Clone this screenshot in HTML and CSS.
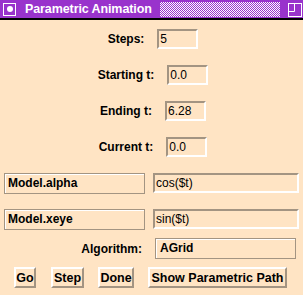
FILE: index.html
```html
<!DOCTYPE html>
<html lang="en">
<head>
    <meta charset="UTF-8">
    <title>Parametric Animation</title>
    <link rel="stylesheet" href="styles.css">
</head>
<body>
    <div class="title-bar">
        <span class="menu-btn"><span class="dot"></span></span>
        <span class="title">Parametric Animation</span>
        <span class="grip"></span>
        <svg class="max-btn" width="14" height="14" viewBox="0 0 14 14">
            <rect x="0.5" y="0.5" width="13" height="13" fill="none" stroke="#fff"/>
            <path d="M0 8.5 H6.5 V0" fill="none" stroke="#fff"/>
        </svg>
    </div>

    <div class="params">
        <div class="param">
            <label>Steps:</label>
            <div class="field">5</div>
        </div>
        <div class="param">
            <label>Starting t:</label>
            <div class="field">0.0</div>
        </div>
        <div class="param">
            <label>Ending t:</label>
            <div class="field">6.28</div>
        </div>
        <div class="param">
            <label>Current t:</label>
            <div class="field">0.0</div>
        </div>
    </div>

    <div class="expr first">
        <div class="name">Model.alpha</div>
        <div class="field wide">cos($t)</div>
    </div>
    <div class="expr">
        <div class="name">Model.xeye</div>
        <div class="field wide">sin($t)</div>
    </div>

    <div class="algo">
        <label>Algorithm:</label>
        <div class="name algo-box">AGrid</div>
    </div>

    <div class="buttons">
        <button class="btn-go">Go</button>
        <button class="btn-step">Step</button>
        <button class="btn-done">Done</button>
        <button class="btn-path">Show Parametric Path</button>
    </div>
</body>
</html>
```

FILE: styles.css
```css
body {
    background-color: #ffe4c4;
    color: black;
    font-family: "Liberation Sans", Arial, sans-serif;
    font-size: 12px;
    margin: 0;
    padding: 0;
    width: 303px;
    height: 295px;
    overflow: hidden;
}

.title-bar {
    background-color: #9933cc;
    border-bottom: 2px solid black;
    height: 18px;
    display: flex;
    align-items: center;
    color: white;
}

.menu-btn {
    flex: none;
    width: 11px;
    height: 11px;
    border: 1px solid white;
    margin-left: 3px;
    display: flex;
    align-items: center;
    justify-content: center;
}

.dot {
    width: 6px;
    height: 6px;
    background-color: white;
    border-radius: 50%;
}

.title {
    flex: none;
    font-weight: bold;
    font-size: 12.5px;
    margin-left: 9px;
    width: 135px;
    overflow: hidden;
    white-space: nowrap;
    letter-spacing: -0.1px;
}

.grip {
    flex: none;
    width: 120px;
    height: 15px;
    margin-top: 1px;
    background-image: conic-gradient(#fff 25%, transparent 0 50%, #fff 0 75%, transparent 0);
    background-size: 2px 2px;
}

.max-btn {
    flex: none;
    margin-left: 8px;
    margin-top: 1px;
}

.params {
    display: flex;
    flex-direction: column;
    gap: 16px;
    padding-top: 9px;
    padding-left: 3px;
}

.param {
    display: flex;
    justify-content: center;
    align-items: center;
    gap: 13px;
}

label {
    font-weight: bold;
}

.field {
    box-sizing: border-box;
    width: 41px;
    height: 20px;
    border-top: 2px solid #a39482;
    border-left: 2px solid #a39482;
    border-bottom: 2px solid #fff;
    border-right: 2px solid #fff;
    padding-left: 1px;
    line-height: 16px;
}

.expr {
    display: flex;
    gap: 8px;
    padding-left: 4px;
    margin-top: 15px;
}

.expr.first {
    margin-top: 16px;
}

.name {
    box-sizing: border-box;
    width: 141px;
    height: 21px;
    border: 1px solid #a39482;
    box-shadow: inset 1px 1px #fff;
    padding-left: 3px;
    line-height: 19px;
    font-weight: bold;
}

.field.wide {
    width: 146px;
    height: 20px;
}

.algo {
    display: flex;
    justify-content: flex-end;
    align-items: center;
    gap: 13px;
    padding-right: 7px;
    margin-top: 8px;
}

.algo-box {
    padding-left: 4px;
}

.buttons {
    display: flex;
    gap: 15px;
    padding-left: 14px;
    margin-top: 8px;
}

button {
    box-sizing: border-box;
    height: 21px;
    background-color: #ffe4c4;
    font-family: "Liberation Sans", Arial, sans-serif;
    font-size: 12.5px;
    font-weight: bold;
    color: black;
    border-top: 2px solid #fff;
    border-left: 2px solid #fff;
    border-bottom: 2px solid #a39482;
    border-right: 2px solid #a39482;
    padding: 0;
    margin: 0;
    text-align: center;
    white-space: nowrap;
}

.btn-go { width: 22px; }
.btn-step { width: 33px; }
.btn-done { width: 36px; margin-left: -1px; }
.btn-path { width: 139px; margin-left: -1px; }
```
